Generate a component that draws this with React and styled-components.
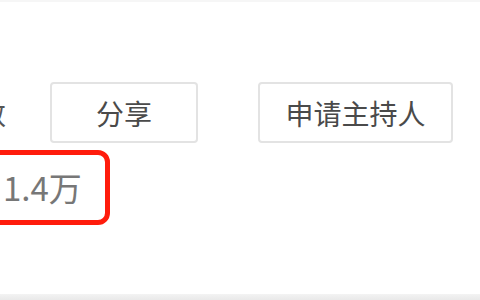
import React from 'react';
import styled, { createGlobalStyle } from 'styled-components';

const GlobalStyle = createGlobalStyle`
    html, body {
        margin: 0;
        padding: 0;
        background: #fff;
    }
    body {
        font-family: "Noto Sans CJK SC", "Noto Sans", sans-serif;
    }
`;

const Screen = styled.div`
    width: 480px;
    height: 300px;
    overflow: hidden;
    background: #fff;
    display: flex;
    flex-direction: column;
`;

const TopEdge = styled.div`
    height: 2px;
    background: #f6f6f6;
`;

const Body = styled.div`
    flex: 1;
    padding-top: 80px;
`;

const ActionRow = styled.div`
    display: flex;
    align-items: center;
    height: 61px;
`;

const CutLabel = styled.span`
    width: 28px;
    margin-left: -22px;
    font-size: 28px;
    color: #555;
    line-height: 1;
`;

const ActionButton = styled.button`
    box-sizing: border-box;
    width: ${(p) => p.$width}px;
    height: 61px;
    margin-left: ${(p) => p.$gap}px;
    border: 2px solid #e3e3e3;
    border-radius: 4px;
    background: #fff;
    color: #4a4a4a;
    font-family: inherit;
    font-size: 28px;
    line-height: 1;
    padding: 0;
    display: flex;
    align-items: center;
    justify-content: center;
`;

const StatRow = styled.div`
    display: flex;
    margin-top: 7px;
`;

const StatBox = styled.div`
    box-sizing: border-box;
    width: 130px;
    height: 75px;
    margin-left: -20px;
    border: 5px solid #ff1c0c;
    border-radius: 12px;
    display: flex;
    align-items: center;
    padding-left: 18px;
    font-size: 33px;
    color: #777;
    line-height: 1;
`;

const BottomEdge = styled.div`
    height: 6px;
    background: linear-gradient(#f3f3f3, #e9e9e9);
`;

export default function App() {
    return (
        <>
            <GlobalStyle />
            <Screen>
                <TopEdge />
                <Body>
                    <ActionRow>
                        <CutLabel>数</CutLabel>
                        <ActionButton $width={148} $gap={44}>分享</ActionButton>
                        <ActionButton $width={195} $gap={60}>申请主持人</ActionButton>
                    </ActionRow>
                    <StatRow>
                        <StatBox>1.4万</StatBox>
                    </StatRow>
                </Body>
                <BottomEdge />
            </Screen>
        </>
    );
}
